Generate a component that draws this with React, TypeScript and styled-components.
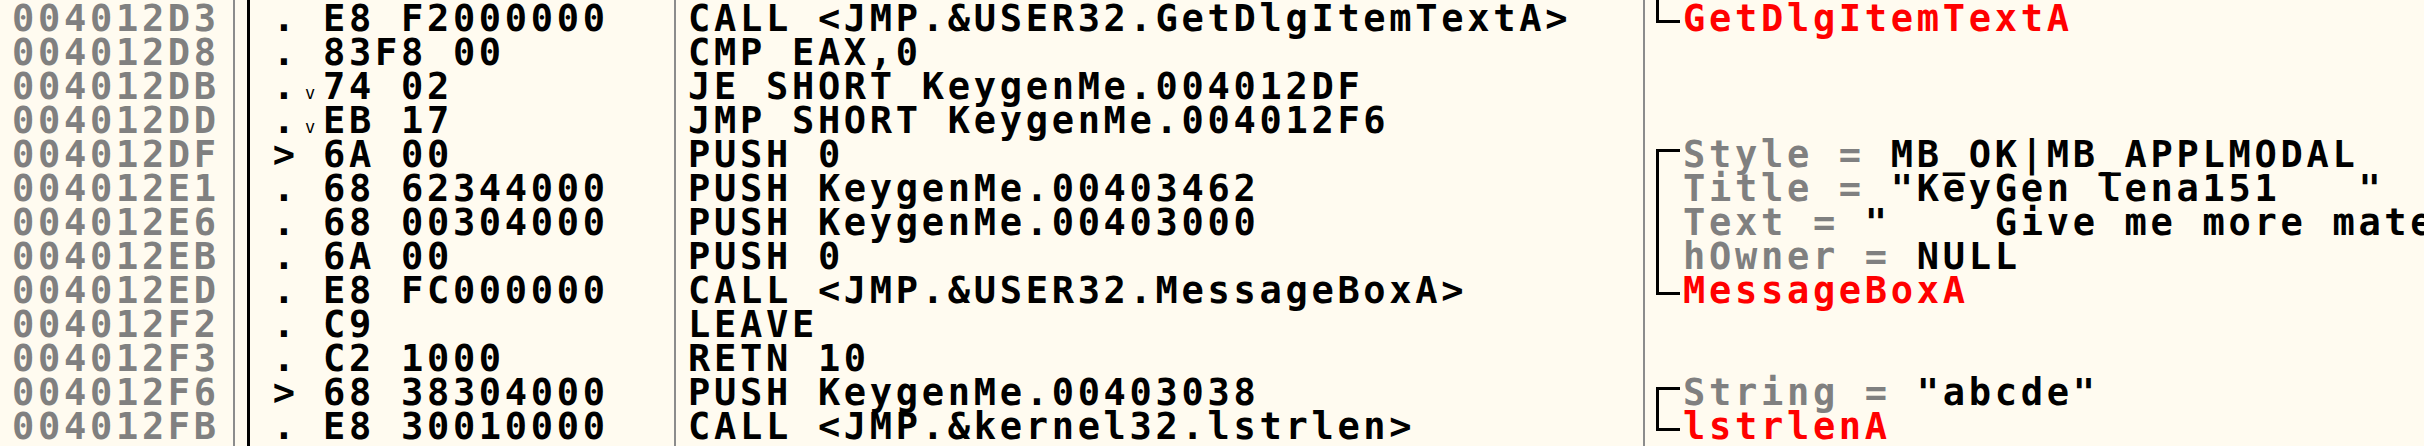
import styled, { createGlobalStyle } from "styled-components";

type Bracket = "start" | "mid" | "end";

type Line = {
  addr: string;
  mark: "." | ">";
  jump?: boolean;
  bytes: string;
  asm: string;
  bracket?: Bracket;
  label?: string;
  value?: string;
  fn?: string;
};

const lines: Line[] = [
  { addr: "004012D3", mark: ".", bytes: "E8 F2000000", asm: "CALL <JMP.&USER32.GetDlgItemTextA>", bracket: "end", fn: "GetDlgItemTextA" },
  { addr: "004012D8", mark: ".", bytes: "83F8 00", asm: "CMP EAX,0" },
  { addr: "004012DB", mark: ".", jump: true, bytes: "74 02", asm: "JE SHORT KeygenMe.004012DF" },
  { addr: "004012DD", mark: ".", jump: true, bytes: "EB 17", asm: "JMP SHORT KeygenMe.004012F6" },
  { addr: "004012DF", mark: ">", bytes: "6A 00", asm: "PUSH 0", bracket: "start", label: "Style = ", value: "MB_OK|MB_APPLMODAL" },
  { addr: "004012E1", mark: ".", bytes: "68 62344000", asm: "PUSH KeygenMe.00403462", bracket: "mid", label: "Title = ", value: '"KeyGen lena151   "' },
  { addr: "004012E6", mark: ".", bytes: "68 00304000", asm: "PUSH KeygenMe.00403000", bracket: "mid", label: "Text = ", value: '"    Give me more mate' },
  { addr: "004012EB", mark: ".", bytes: "6A 00", asm: "PUSH 0", bracket: "mid", label: "hOwner = ", value: "NULL" },
  { addr: "004012ED", mark: ".", bytes: "E8 FC000000", asm: "CALL <JMP.&USER32.MessageBoxA>", bracket: "end", fn: "MessageBoxA" },
  { addr: "004012F2", mark: ".", bytes: "C9", asm: "LEAVE" },
  { addr: "004012F3", mark: ".", bytes: "C2 1000", asm: "RETN 10" },
  { addr: "004012F6", mark: ">", bytes: "68 38304000", asm: "PUSH KeygenMe.00403038", bracket: "start", label: "String = ", value: '"abcde"' },
  { addr: "004012FB", mark: ".", bytes: "E8 30010000", asm: "CALL <JMP.&kernel32.lstrlen>", bracket: "end", fn: "lstrlenA" },
];

const GlobalStyle = createGlobalStyle`
  html, body {
    margin: 0;
    padding: 0;
    background: #fffbf0;
    overflow: hidden;
  }
`;

const Pane = styled.div`
  display: flex;
  flex-direction: column;
  width: 2424px;
  height: 446px;
  background: #fffbf0;
  font-family: "DejaVu Sans Mono", "Liberation Mono", monospace;
  font-weight: bold;
  font-size: 37px;
  letter-spacing: 3.7px;
  color: #000;
  overflow: hidden;
`;

const Row = styled.div`
  display: grid;
  grid-template-columns: 235px 15px 426px 969px 1fr;
  height: 34px;
  flex: none;
`;

const Filler = styled(Row)`
  height: auto;
  flex: 1;
`;

const Cell = styled.div`
  box-sizing: border-box;
  padding-top: 4px;
  line-height: 30px;
  white-space: pre;
`;

const AddrCell = styled(Cell)`
  padding-left: 12px;
  color: #808080;
  border-right: 2px solid #8c8c8c;
`;

const ProcCell = styled(Cell)`
  border-right: 3px solid #000;
`;

const HexCell = styled(Cell)`
  padding-left: 21px;
  border-right: 2px solid #8c8c8c;
`;

const Slot = styled.span`
  display: inline-block;
  width: 26px;
  letter-spacing: 0;
  text-align: center;
`;

const JumpMark = styled(Slot)`
  font-size: 17px;
  font-weight: normal;
`;

const AsmCell = styled(Cell)`
  padding-left: 12px;
  border-right: 2px solid #8c8c8c;
`;

const CommentCell = styled.div`
  display: flex;
  padding-left: 11px;
`;

const BracketBox = styled.svg`
  flex: none;
  width: 27px;
  height: 34px;
`;

const CommentText = styled.span`
  padding-top: 4px;
  line-height: 30px;
  white-space: pre;
`;

const Key = styled.span`
  color: #808080;
`;

const Fn = styled.span`
  color: #ff0000;
`;

const BracketMark = ({ kind }: { kind?: Bracket }) => (
  <BracketBox viewBox="0 0 27 34">
    {kind === "end" && (
      <>
        <rect x="0" y="0" width="3" height="23" />
        <rect x="0" y="20" width="24" height="3" />
      </>
    )}
    {kind === "start" && (
      <>
        <rect x="0" y="13" width="24" height="3" />
        <rect x="0" y="13" width="3" height="21" />
      </>
    )}
    {kind === "mid" && <rect x="0" y="0" width="3" height="34" />}
  </BracketBox>
);

export default function App() {
  return (
    <>
      <GlobalStyle />
      <Pane>
        {lines.map((l) => (
          <Row key={l.addr}>
            <AddrCell>{l.addr}</AddrCell>
            <ProcCell />
            <HexCell>
              <Slot>{l.mark}</Slot>
              {l.jump ? <JumpMark>v</JumpMark> : <Slot> </Slot>}
              {l.bytes}
            </HexCell>
            <AsmCell>{l.asm}</AsmCell>
            <CommentCell>
              <BracketMark kind={l.bracket} />
              <CommentText>
                {l.label && <Key>{l.label}</Key>}
                {l.value}
                {l.fn && <Fn>{l.fn}</Fn>}
              </CommentText>
            </CommentCell>
          </Row>
        ))}
        <Filler>
          <AddrCell />
          <ProcCell />
          <HexCell />
          <AsmCell />
          <CommentCell />
        </Filler>
      </Pane>
    </>
  );
}
